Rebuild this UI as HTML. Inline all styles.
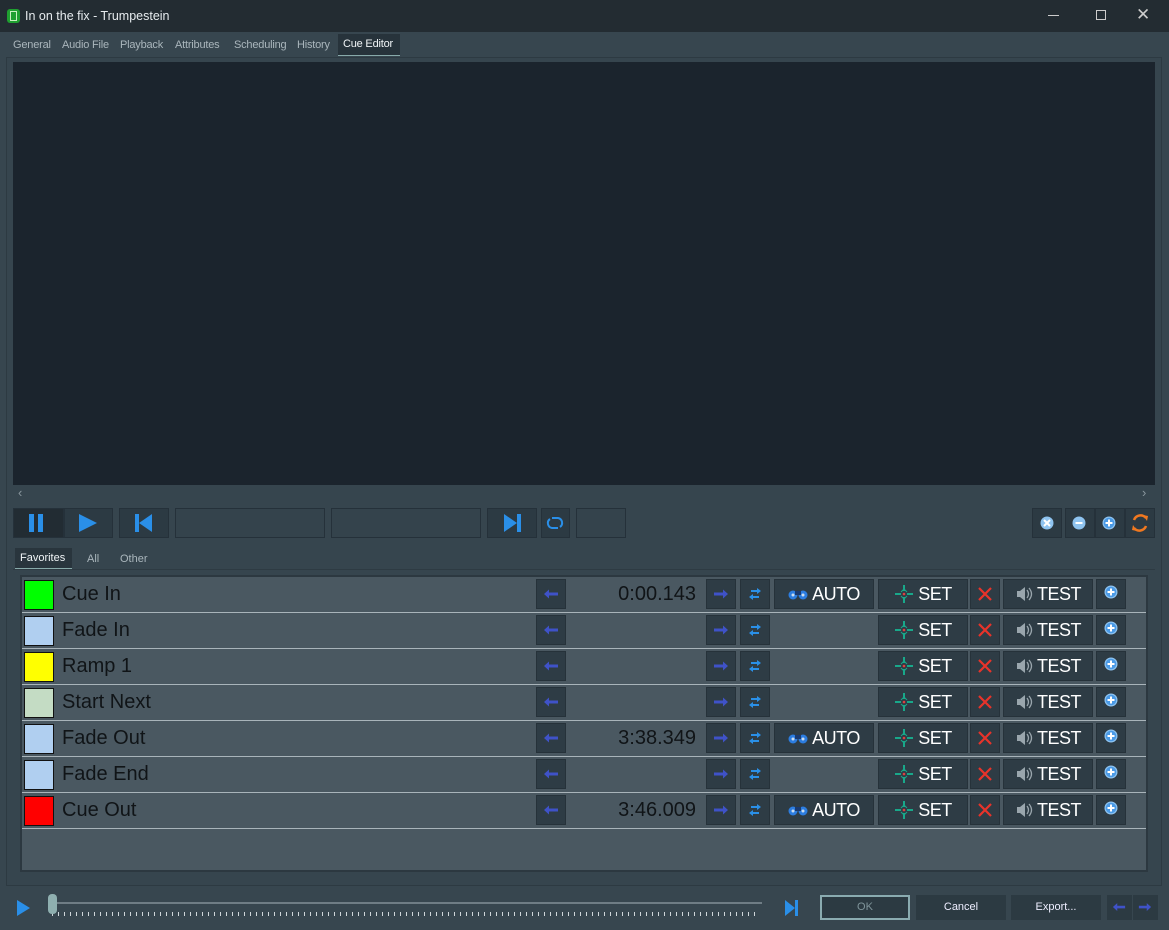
<!DOCTYPE html><html><head><meta charset="utf-8"><style>
*{box-sizing:border-box;margin:0;padding:0}
body{width:1169px;height:930px;background:#37464f;font-family:"Liberation Sans",sans-serif;position:relative;overflow:hidden;color:#dfe5e8}
.a{position:absolute}
.tb{left:0;top:0;width:1169px;height:32px;background:#232c32}
.tab{top:39px;font-size:11px;color:#aab6bc;letter-spacing:-0.2px}
.btn{position:absolute;background:#2c3a43;border:1px solid #25313a}
.row{position:absolute;left:22px;width:1124px;height:36px;border-bottom:1px solid #a9b4ba}
.sw{position:absolute;left:2px;top:3px;width:30px;height:30px;border:1px solid #111}
.lb{position:absolute;left:40px;top:6px;font-size:20px;color:#101417}
.tm{position:absolute;right:450px;top:6px;font-size:20px;color:#101417}
.b{position:absolute;top:2px;height:30px;background:#2e3c45;border:1px solid #26323a;color:#fff;font-size:18px;display:flex;align-items:center;justify-content:center;gap:4px;letter-spacing:-0.5px}
</style></head><body>
<svg width="0" height="0" style="position:absolute"><defs>
<symbol id="la" viewBox="0 0 16 16"><path d="M1 8 L6 3.5 V6.5 H15 V9.5 H6 V12.5Z" fill="#3f52c8"/></symbol>
<symbol id="ra" viewBox="0 0 16 16"><path d="M15 8 L10 3.5 V6.5 H1 V9.5 H10 V12.5Z" fill="#3f52c8"/></symbol>
<symbol id="sw" viewBox="0 0 16 16"><path d="M2 4h8V2l4 3-4 3V6H2zM14 10H6V8l-4 3 4 3v-2h8z" fill="#2a90e8"/><path d="M2 4h2v2H2zM12 10h2v2h-2z" fill="#2e3c45"/></symbol>
<symbol id="bi" viewBox="0 0 20 12"><circle cx="5" cy="7" r="4.5" fill="#2c7de0"/><circle cx="15" cy="7" r="4.5" fill="#2c7de0"/><rect x="7" y="3" width="6" height="4" fill="#1a3a70"/><circle cx="5" cy="7" r="1.5" fill="#cde"/><circle cx="15" cy="7" r="1.5" fill="#cde"/></symbol>
<symbol id="cr" viewBox="0 0 20 20"><path d="M10 1v6M10 13v6M1 10h6M13 10h6" stroke="#19a88a" stroke-width="2"/><path d="M7 8l3-3 3 3M7 12l3 3 3-3" fill="none" stroke="#19a88a" stroke-width="1"/><circle cx="10" cy="10" r="1.3" fill="#e04040"/></symbol>
<symbol id="x" viewBox="0 0 16 16"><path d="M2 2L14 14M14 2L2 14" stroke="#e8332a" stroke-width="2.2"/></symbol>
<symbol id="sp" viewBox="0 0 18 18"><path d="M2 6h3l5-4v14l-5-4H2z" fill="#9aa6ad"/><path d="M12 5q3 4 0 8M14 3q5 6 0 12" fill="none" stroke="#9aa6ad" stroke-width="1.3"/></symbol>
<symbol id="pl" viewBox="0 0 16 16"><circle cx="8" cy="8" r="6.5" fill="#8fc4f0"/><circle cx="8" cy="8" r="5.3" fill="#4a9ae6"/><path d="M8 4.5v7M4.5 8h7" stroke="#fff" stroke-width="2"/></symbol>
</defs></svg>
<div class="a tb"></div>
<div class="a" style="left:7px;top:9px;width:13px;height:14px;background:#1fa030;border-radius:3px"></div>
<div class="a" style="left:10px;top:11px;width:7px;height:10px;border:1px solid #c8f0c0"></div>
<div class="a" style="left:25px;top:9px;font-size:12.5px;color:#e6ebee">In on the fix - Trumpestein</div>
<div class="a" style="left:1048px;top:15px;width:11px;height:1px;background:#ccc"></div>
<div class="a" style="left:1096px;top:10px;width:10px;height:10px;border:1px solid #ccc"></div>
<div class="a" style="left:1136px;top:5px;font-size:17px;color:#ccc">✕</div>
<div class="a tab" style="left:13px">General</div><div class="a tab" style="left:62px">Audio File</div><div class="a tab" style="left:120px">Playback</div><div class="a tab" style="left:175px">Attributes</div><div class="a tab" style="left:234px">Scheduling</div><div class="a tab" style="left:297px">History</div>
<div class="a" style="left:338px;top:34px;width:62px;height:22px;background:#27333b;border-bottom:1px solid #8aa"></div>
<div class="a tab" style="left:343px;top:38px;color:#f0f4f6">Cue Editor</div>
<div class="a" style="left:6px;top:57px;width:1156px;height:829px;border:1px solid #2d3a42;background:#36454e"></div>
<div class="a" style="left:13px;top:62px;width:1142px;height:423px;background:#1b242d"></div>
<div class="a" style="left:18px;top:485px;font-size:13px;color:#8a979e">‹</div>
<div class="a" style="left:1142px;top:485px;font-size:13px;color:#8a979e">›</div>
<div class="btn" style="left:13px;top:508px;width:51px;height:30px;background:#222c33"></div>
<div class="a" style="left:29px;top:514px;width:5px;height:18px;background:#2a8fe8"></div><div class="a" style="left:38px;top:514px;width:5px;height:18px;background:#2a8fe8"></div>
<div class="btn" style="left:64px;top:508px;width:49px;height:30px"></div>
<svg class="a" style="left:78px;top:514px" width="20" height="18"><path d="M1 0L19 9L1 18Z" fill="#2a8fe8"/></svg>
<div class="btn" style="left:119px;top:508px;width:50px;height:30px"></div>
<svg class="a" style="left:135px;top:514px" width="18" height="18"><rect x="0" y="0" width="4" height="18" fill="#2a8fe8"/><path d="M17 0L4 9L17 18Z" fill="#2a8fe8"/></svg>
<div class="btn" style="left:175px;top:508px;width:150px;height:30px;background:#34434c"></div>
<div class="btn" style="left:331px;top:508px;width:150px;height:30px;background:#34434c"></div>
<div class="btn" style="left:487px;top:508px;width:50px;height:30px"></div>
<svg class="a" style="left:503px;top:514px" width="18" height="18"><path d="M1 0L14 9L1 18Z" fill="#2a8fe8"/><rect x="14" y="0" width="4" height="18" fill="#2a8fe8"/></svg>
<div class="btn" style="left:541px;top:508px;width:29px;height:30px"></div>
<svg class="a" style="left:546px;top:514px" width="18" height="18"><path d="M6 4h6a5 5 0 0 1 2 9M12 14H6a5 5 0 0 1-2-9" fill="none" stroke="#2a8fe8" stroke-width="2"/></svg>
<div class="btn" style="left:576px;top:508px;width:50px;height:30px;background:#34434c"></div>
<div class="btn" style="left:1032px;top:508px;width:30px;height:30px"></div><svg class="a" style="left:1039px;top:515px" width="16" height="16"><circle cx="8" cy="8" r="6.5" fill="#8fc4f0"/><path d="M5 5l6 6M11 5l-6 6" stroke="#fff" stroke-width="2"/></svg>
<div class="btn" style="left:1065px;top:508px;width:30px;height:30px"></div><svg class="a" style="left:1071px;top:515px" width="16" height="16"><circle cx="8" cy="8" r="6.5" fill="#8fc4f0"/><path d="M4.5 8h7" stroke="#fff" stroke-width="2"/></svg>
<div class="btn" style="left:1095px;top:508px;width:30px;height:30px"></div><svg class="a" style="left:1101px;top:515px" width="16" height="16"><use href="#pl"/></svg>
<div class="btn" style="left:1125px;top:508px;width:30px;height:30px"></div>
<svg class="a" style="left:1129px;top:512px" width="22" height="22"><path d="M5 8a7 7 0 0 1 12-2M17 14a7 7 0 0 1-12 2" fill="none" stroke="#f07820" stroke-width="2.5"/><path d="M14 3l5 1-1 5zM8 19l-5-1 1-5z" fill="#f07820"/></svg>
<div class="a" style="left:15px;top:548px;width:57px;height:21px;background:#29353d;border-bottom:1px solid #8aa"></div>
<div class="a" style="left:20px;top:552px;font-size:11px;color:#f0f4f6">Favorites</div>
<div class="a" style="left:87px;top:553px;font-size:11px;color:#aab6bc">All</div>
<div class="a" style="left:120px;top:553px;font-size:11px;color:#aab6bc">Other</div>
<div class="a" style="left:13px;top:569px;width:1142px;height:1px;background:#2e3b43"></div>
<div class="a" style="left:20px;top:575px;width:1128px;height:297px;background:#4a5861;border:2px solid #2c3840"></div>

<div id="rows"></div>
<script>
var R=[["Cue In","#00ff00","0:00.143",1],["Fade In","#b0cff0","",0],["Ramp 1","#ffff00","",0],["Start Next","#c4dcc4","",0],["Fade Out","#b0cff0","3:38.349",1],["Fade End","#b0cff0","",0],["Cue Out","#ff0000","3:46.009",1]];
var h="";R.forEach(function(r,i){var y=577+i*36;
h+='<div class="row" style="top:'+y+'px"><div class="sw" style="background:'+r[1]+'"></div><div class="lb">'+r[0]+'</div>'+
'<div class="tm">'+r[2]+'</div>'+
'<div class="b" style="left:514px;width:30px"><svg width="16" height="16"><use href="#la"/></svg></div>'+
'<div class="b" style="left:684px;width:30px"><svg width="16" height="16"><use href="#ra"/></svg></div>'+
'<div class="b" style="left:718px;width:30px"><svg width="16" height="16"><use href="#sw"/></svg></div>'+
(r[3]?'<div class="b" style="left:752px;width:100px"><svg width="20" height="12"><use href="#bi"/></svg>AUTO</div>':'')+
'<div class="b" style="left:856px;width:90px"><svg width="20" height="20"><use href="#cr"/></svg>SET</div>'+
'<div class="b" style="left:948px;width:30px"><svg width="16" height="16"><use href="#x"/></svg></div>'+
'<div class="b" style="left:981px;width:90px"><svg width="18" height="18"><use href="#sp"/></svg>TEST</div>'+
'<div class="b" style="left:1074px;width:30px;align-items:flex-start;padding-top:4px"><svg width="16" height="16"><use href="#pl"/></svg></div></div>';});
document.getElementById("rows").innerHTML=h;
</script>

<svg class="a" style="left:16px;top:900px" width="16" height="16"><path d="M1 0L14 8L1 16Z" fill="#2a8fe8"/></svg>
<div class="a" style="left:55px;top:902px;width:707px;height:2px;background:#6f7d85"></div>
<div class="a" style="left:52px;top:912px;width:708px;height:4px;background:repeating-linear-gradient(90deg,#cfd6da 0 1px,transparent 1px 6px)"></div>
<div class="a" style="left:48px;top:894px;width:9px;height:20px;background:#8fb0b0;border-radius:4px"></div>
<svg class="a" style="left:785px;top:900px" width="14" height="16"><path d="M0 0L10 8L0 16Z" fill="#2a8fe8"/><rect x="10" y="0" width="3" height="16" fill="#2a8fe8"/></svg>
<div class="a" style="left:820px;top:895px;width:90px;height:25px;background:#2c3a42;border:2px solid #8aabb0;color:#7f949a;font-size:11px;text-align:center;line-height:21px">OK</div>
<div class="a" style="left:916px;top:895px;width:90px;height:25px;background:#2c3a42;color:#eef;font-size:11px;text-align:center;line-height:25px">Cancel</div>
<div class="a" style="left:1011px;top:895px;width:90px;height:25px;background:#2c3a42;color:#eef;font-size:11px;text-align:center;line-height:25px">Export...</div>
<div class="a" style="left:1107px;top:895px;width:25px;height:25px;background:#2c3a42"></div><svg class="a" style="left:1112px;top:900px" width="14" height="14"><use href="#la"/></svg>
<div class="a" style="left:1133px;top:895px;width:25px;height:25px;background:#2c3a42"></div><svg class="a" style="left:1138px;top:900px" width="14" height="14"><use href="#ra"/></svg>
</body></html>
